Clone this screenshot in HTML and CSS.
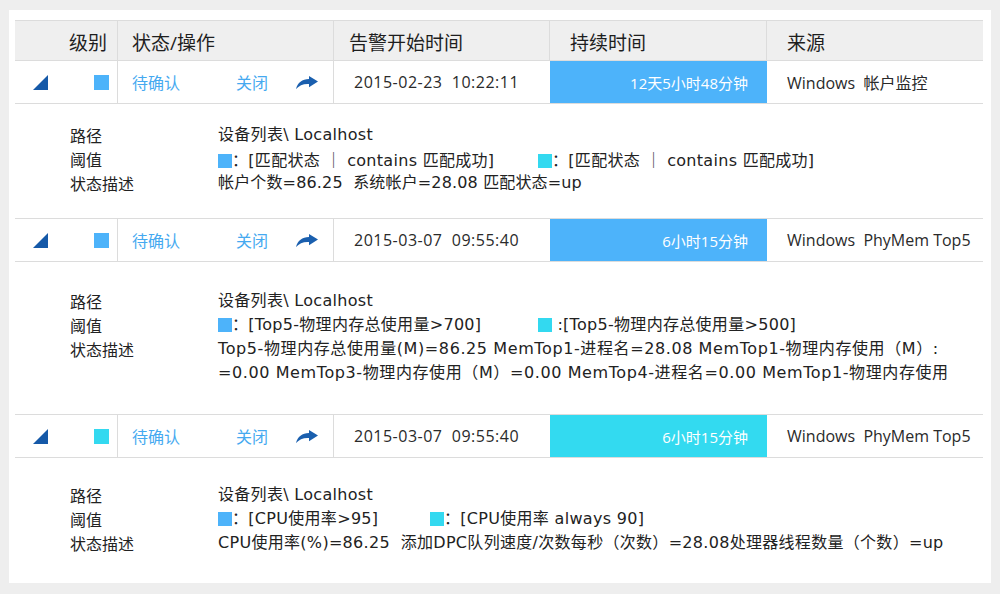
FILE: index.html
```html
<!DOCTYPE html>
<html lang="zh-CN">
<head>
<meta charset="utf-8">
<title>告警列表</title>
<link rel="stylesheet" href="styles.css">
</head>
<body>
<div class="panel">
  <div class="table">
    <div class="grid head">
      <div class="hc hc-level">级别</div>
      <div class="hc hc-state">状态/操作</div>
      <div class="hc hc-time">告警开始时间</div>
      <div class="hc hc-dur">持续时间</div>
      <div class="hc hc-src">来源</div>
    </div>

    <div class="grid row">
      <div class="c c-level">
        <svg class="tri" viewBox="0 0 15 15"><polygon points="15,0 15,15 0,15"/></svg>
        <span class="sq sq-blue"></span>
      </div>
      <div class="c c-state">
        <span class="lnk lnk-confirm">待确认</span>
        <span class="lnk lnk-close">关闭</span>
        <svg class="fwd" viewBox="0 0 22 13"><path d="M13 0 L22 5.6 L13 11.2 L13 8 C7.5 7.6 3.2 9.4 0 13 C1.6 6.6 6.2 3.3 13 3.1 Z"/></svg>
      </div>
      <div class="c c-time">2015-02-23&nbsp;&nbsp;10:22:11</div>
      <div class="c c-dur dur-blue">12天5小时48分钟</div>
      <div class="c c-src">Windows&nbsp;&nbsp;帐户监控</div>
    </div>
    <div class="detail d1">
      <div class="dl">路径</div><div class="dv">设备列表\ Localhost</div>
      <div class="dl">阈值</div>
      <div class="dv thr">
        <span class="ti ti-w1"><span class="tsq sq-blue"></span>：[匹配状态 <span class="bar">｜</span> contains 匹配成功]</span>
        <span class="ti"><span class="tsq sq-cyan"></span>：[匹配状态 <span class="bar">｜</span> contains 匹配成功]</span>
      </div>
      <div class="dl">状态描述</div><div class="dv dv-tight">帐户个数=86.25&nbsp;&nbsp;系统帐户=28.08 匹配状态=up</div>
    </div>

    <div class="grid row">
      <div class="c c-level">
        <svg class="tri" viewBox="0 0 15 15"><polygon points="15,0 15,15 0,15"/></svg>
        <span class="sq sq-blue"></span>
      </div>
      <div class="c c-state">
        <span class="lnk lnk-confirm">待确认</span>
        <span class="lnk lnk-close">关闭</span>
        <svg class="fwd" viewBox="0 0 22 13"><path d="M13 0 L22 5.6 L13 11.2 L13 8 C7.5 7.6 3.2 9.4 0 13 C1.6 6.6 6.2 3.3 13 3.1 Z"/></svg>
      </div>
      <div class="c c-time">2015-03-07&nbsp;&nbsp;09:55:40</div>
      <div class="c c-dur dur-blue">6小时15分钟</div>
      <div class="c c-src">Windows&nbsp;&nbsp;PhyMem Top5</div>
    </div>
    <div class="detail d2">
      <div class="dl">路径</div><div class="dv">设备列表\ Localhost</div>
      <div class="dl">阈值</div>
      <div class="dv thr">
        <span class="ti ti-w1"><span class="tsq sq-blue"></span>：[Top5-物理内存总使用量&gt;700]</span>
        <span class="ti"><span class="tsq sq-cyan"></span> :[Top5-物理内存总使用量&gt;500]</span>
      </div>
      <div class="dl">状态描述</div>
      <div class="dv dv-wide">Top5-物理内存总使用量(M)=86.25 MemTop1-进程名=28.08 MemTop1-物理内存使用（M）:</div>
      <div class="dl"></div>
      <div class="dv dv-wide">=0.00 MemTop3-物理内存使用（M）=0.00 MemTop4-进程名=0.00 MemTop1-物理内存使用</div>
    </div>

    <div class="grid row">
      <div class="c c-level">
        <svg class="tri" viewBox="0 0 15 15"><polygon points="15,0 15,15 0,15"/></svg>
        <span class="sq sq-cyan"></span>
      </div>
      <div class="c c-state">
        <span class="lnk lnk-confirm">待确认</span>
        <span class="lnk lnk-close">关闭</span>
        <svg class="fwd" viewBox="0 0 22 13"><path d="M13 0 L22 5.6 L13 11.2 L13 8 C7.5 7.6 3.2 9.4 0 13 C1.6 6.6 6.2 3.3 13 3.1 Z"/></svg>
      </div>
      <div class="c c-time">2015-03-07&nbsp;&nbsp;09:55:40</div>
      <div class="c c-dur dur-cyan">6小时15分钟</div>
      <div class="c c-src">Windows&nbsp;&nbsp;PhyMem Top5</div>
    </div>
    <div class="detail d3">
      <div class="dl">路径</div><div class="dv">设备列表\ Localhost</div>
      <div class="dl">阈值</div>
      <div class="dv thr">
        <span class="ti ti-w3"><span class="tsq sq-blue"></span>：[CPU使用率&gt;95]</span>
        <span class="ti"><span class="tsq sq-cyan"></span>：[CPU使用率 always 90]</span>
      </div>
      <div class="dl">状态描述</div><div class="dv">CPU使用率(%)=86.25&nbsp;&nbsp;添加DPC队列速度/次数每秒（次数）=28.08处理器线程数量（个数）=up</div>
    </div>
  </div>
</div>
</body>
</html>
```

FILE: styles.css
```css
* { box-sizing: border-box; }
html, body { margin: 0; padding: 0; }
body {
  background: #eeeeee;
  font-family: "Open Sans", "Noto Sans CJK SC", sans-serif;
  color: #222222;
  width: 1000px;
  height: 594px;
  overflow: hidden;
}
.panel {
  margin: 10px 9px 0 9px;
  height: 573px;
  background: #ffffff;
  padding: 10px 8px 0 6px;
}
.table { width: 968px; }
.grid {
  display: grid;
  grid-template-columns: 103px 216px 216px 217px 216px;
}
.head {
  height: 41px;
  background: #efefef;
  border-top: 1px solid #dcdcdc;
  border-bottom: 1px solid #dcdcdc;
  font-size: 19px;
  color: #1e1e1e;
}
.hc {
  display: flex;
  align-items: center;
  padding-top: 2px;
  border-right: 1px solid #dcdcdc;
}
.hc-src { border-right: none; padding-left: 20px; }
.hc-level { justify-content: flex-end; padding-right: 10px; }
.hc-state { padding-left: 14px; }
.hc-time { padding-left: 15px; }
.hc-dur { padding-left: 20px; }

.row {
  height: 43px;
  border-bottom: 1px solid #dcdcdc;
}
.c {
  display: flex;
  align-items: center;
}
.c-level {
  justify-content: space-between;
  padding: 0 8px 0 18px;
  border-right: 1px solid #dcdcdc;
}
.tri { width: 15px; height: 15px; fill: #1559a8; }
.sq { width: 15px; height: 15px; display: block; }
.sq-blue { background: #4db3fa; }
.sq-cyan { background: #33d9f0; }
.c-state {
  padding-left: 14px;
  border-right: 1px solid #dcdcdc;
  font-size: 16px;
}
.lnk { color: #45a9f0; }
.lnk-confirm { width: 104px; }
.lnk-close { width: 60px; }
.fwd { width: 22px; height: 13px; fill: #1a5fae; }
.c-time {
  padding-left: 20px;
  font-size: 16px;
  letter-spacing: 0.5px;
  color: #2a2a2a;
}
.c-dur {
  justify-content: flex-end;
  padding-right: 19px;
  color: #ffffff;
  font-size: 15px;
}
.dur-blue { background: #4db3fa; }
.dur-cyan { background: #33daf0; }
.c-src { padding-left: 20px; font-size: 16px; color: #2a2a2a; }

.detail {
  display: grid;
  grid-template-columns: 148px 1fr;
  grid-auto-rows: 24px;
  align-content: start;
  padding-left: 55px;
  font-family: "DejaVu Sans", "Noto Sans CJK SC", sans-serif;
  font-size: 16px;
  line-height: 24px;
  color: #222222;
  white-space: nowrap;
}
.dl { font-family: "Noto Sans CJK SC", sans-serif; }
.dv { letter-spacing: 0.3px; }
.dv-tight { letter-spacing: 0.15px; }
.dv-wide { letter-spacing: 0.6px; }
.bar { font-family: "Noto Sans CJK SC", sans-serif; color: #333333; }
.d1 { height: 115px; padding-top: 19px; border-bottom: 1px solid #dcdcdc; }
.d2 { height: 153px; padding-top: 27px; border-bottom: 1px solid #dcdcdc; }
.d3 { padding-top: 25px; }
.thr { display: flex; }
.ti { display: inline-block; }
.ti-w1 { width: 320px; }
.ti-w3 { width: 212px; }
.tsq {
  display: inline-block;
  width: 14px;
  height: 14px;
  vertical-align: -2px;
}
```
